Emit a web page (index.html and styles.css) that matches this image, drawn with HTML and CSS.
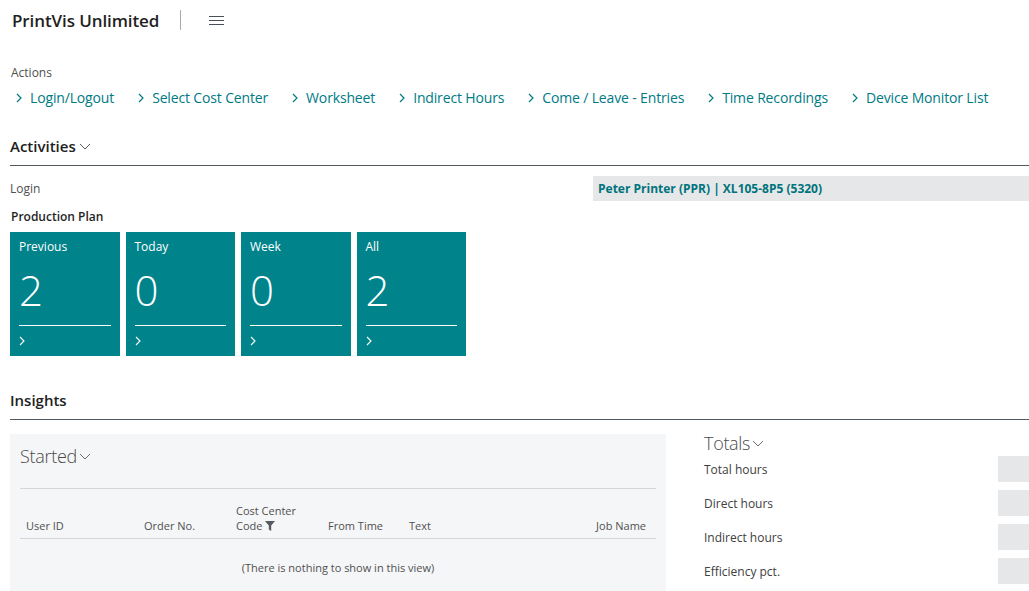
FILE: index.html
```html
<!DOCTYPE html>
<html lang="en">
<head>
<meta charset="utf-8">
<title>PrintVis Unlimited</title>
<link rel="stylesheet" href="styles.css">
</head>
<body>
<header class="topbar">
  <div class="app-title">PrintVis Unlimited</div>
  <div class="divider"></div>
  <div class="hamburger"><span></span><span></span><span></span></div>
</header>

<section class="actions">
  <div class="actions-label">Actions</div>
  <nav class="action-links">
    <a class="action"><svg class="chev" viewBox="0 0 6 10"><polyline points="1,1 5,5 1,9"/></svg>Login/Logout</a>
    <a class="action"><svg class="chev" viewBox="0 0 6 10"><polyline points="1,1 5,5 1,9"/></svg>Select Cost Center</a>
    <a class="action"><svg class="chev" viewBox="0 0 6 10"><polyline points="1,1 5,5 1,9"/></svg>Worksheet</a>
    <a class="action"><svg class="chev" viewBox="0 0 6 10"><polyline points="1,1 5,5 1,9"/></svg>Indirect Hours</a>
    <a class="action"><svg class="chev" viewBox="0 0 6 10"><polyline points="1,1 5,5 1,9"/></svg>Come / Leave - Entries</a>
    <a class="action"><svg class="chev" viewBox="0 0 6 10"><polyline points="1,1 5,5 1,9"/></svg>Time Recordings</a>
    <a class="action"><svg class="chev" viewBox="0 0 6 10"><polyline points="1,1 5,5 1,9"/></svg>Device Monitor List</a>
  </nav>
</section>

<section class="activities">
  <h2 class="section-head">Activities<svg class="down" viewBox="0 0 12 7"><polyline points="1,1 6,6 11,1"/></svg></h2>
  <div class="login-row">
    <div class="login-label">Login</div>
    <div class="login-value">Peter Printer (PPR) | XL105-8P5 (5320)</div>
  </div>
  <div class="group-label">Production Plan</div>
  <div class="tiles">
    <div class="tile"><div class="tile-title">Previous</div><div class="tile-num">2</div><div class="tile-foot"><svg class="tchev" viewBox="0 0 6 10"><polyline points="1,1 5,5 1,9"/></svg></div></div>
    <div class="tile"><div class="tile-title">Today</div><div class="tile-num">0</div><div class="tile-foot"><svg class="tchev" viewBox="0 0 6 10"><polyline points="1,1 5,5 1,9"/></svg></div></div>
    <div class="tile"><div class="tile-title">Week</div><div class="tile-num">0</div><div class="tile-foot"><svg class="tchev" viewBox="0 0 6 10"><polyline points="1,1 5,5 1,9"/></svg></div></div>
    <div class="tile"><div class="tile-title">All</div><div class="tile-num">2</div><div class="tile-foot"><svg class="tchev" viewBox="0 0 6 10"><polyline points="1,1 5,5 1,9"/></svg></div></div>
  </div>
</section>

<section class="insights">
  <h2 class="section-head">Insights</h2>
  <div class="insight-body">
    <div class="started">
      <div class="part-title">Started<svg class="down" viewBox="0 0 12 7"><polyline points="1,1 6,6 11,1"/></svg></div>
      <div class="grid-head">
        <div class="col c-user">User ID</div>
        <div class="col c-order">Order No.</div>
        <div class="col c-cc">Cost Center<br>Code <svg class="funnel" viewBox="0 0 10 10"><path d="M0 0H10L6.2 4.6V10L3.8 8.6V4.6Z"/></svg></div>
        <div class="col c-from">From Time</div>
        <div class="col c-text">Text</div>
        <div class="col c-job">Job Name</div>
      </div>
      <div class="empty">(There is nothing to show in this view)</div>
    </div>
    <div class="totals">
      <div class="part-title">Totals<svg class="down" viewBox="0 0 12 7"><polyline points="1,1 6,6 11,1"/></svg></div>
      <div class="total-row"><span>Total hours</span><span class="box"></span></div>
      <div class="total-row"><span>Direct hours</span><span class="box"></span></div>
      <div class="total-row"><span>Indirect hours</span><span class="box"></span></div>
      <div class="total-row"><span>Efficiency pct.</span><span class="box"></span></div>
    </div>
  </div>
</section>
</body>
</html>
```

FILE: styles.css
```css
html, body {
  margin: 0;
  padding: 0;
  background: #ffffff;
  overflow: hidden;
}
body {
  font-family: "Open Sans", "Noto Sans", "Liberation Sans", sans-serif;
  color: #212121;
  width: 1029px;
  height: 591px;
}

.topbar {
  height: 40px;
  display: flex;
  align-items: center;
  padding-left: 12px;
}
.app-title {
  font-size: 17px;
  font-weight: 600;
  color: #1f1f1f;
  letter-spacing: -0.1px;
}
.divider {
  width: 1px;
  height: 20px;
  background: #a6aab0;
  margin-left: 21px;
}
.hamburger {
  margin-left: 28px;
  width: 15px;
  display: flex;
  flex-direction: column;
  gap: 3px;
}
.hamburger span {
  display: block;
  height: 1px;
  background: #4a5058;
}

.actions {
  margin-top: 24px;
  padding-left: 11px;
}
.actions-label {
  font-size: 12px;
  line-height: 18px;
  color: #505050;
}
.action-links {
  display: flex;
  gap: 24px;
  margin-top: 6px;
  padding-left: 5px;
}
.action {
  display: flex;
  align-items: center;
  font-size: 14px;
  line-height: 20px;
  color: #007a85;
  letter-spacing: -0.15px;
}
.chev {
  width: 6px;
  height: 10px;
  margin-right: 8px;
  fill: none;
  stroke: #007a85;
  stroke-width: 1.2;
}

.section-head {
  margin: 0 0 0 10px;
  font-size: 15px;
  font-weight: 600;
  line-height: 22px;
  color: #212121;
  padding-bottom: 8px;
  border-bottom: 1px solid #505a60;
  display: flex;
  align-items: center;
}
.down {
  width: 12px;
  height: 7px;
  margin-left: 3px;
  fill: none;
  stroke: #505a60;
  stroke-width: 1;
}
.activities {
  margin-top: 27px;
}
.login-row {
  display: flex;
  margin: 10px 0 0 10px;
  height: 25px;
  align-items: center;
}
.login-label {
  width: 583px;
  font-size: 12px;
  color: #505050;
}
.login-value {
  flex: 1;
  height: 25px;
  background: #e6e7e8;
  padding-left: 5px;
  font-size: 12px;
  font-weight: 700;
  line-height: 25px;
  color: #00737d;
}
.group-label {
  margin: 8px 0 0 11px;
  font-size: 12px;
  font-weight: 600;
  line-height: 16px;
  color: #1f1f1f;
}
.tiles {
  display: flex;
  gap: 6px;
  margin: 7px 0 0 10px;
}
.tile {
  width: 109.5px;
  height: 124px;
  background: #00838b;
  color: #ffffff;
  padding: 0 9px;
  box-sizing: border-box;
  display: flex;
  flex-direction: column;
}
.tile-title {
  margin-top: 7px;
  font-size: 12px;
  line-height: 16px;
}
.tile-num {
  margin-top: 5px;
  font-size: 42px;
  font-weight: 300;
  line-height: 60px;
  height: 65px;
  border-bottom: 1px solid #ffffff;
}
.tile-foot {
  height: 29px;
  display: flex;
  align-items: center;
}
.tchev {
  width: 6px;
  height: 10px;
  fill: none;
  stroke: #ffffff;
  stroke-width: 1.1;
}

.insights {
  margin-top: 33px;
}
.insight-body {
  display: flex;
  margin: 0 0 0 10px;
}
.started {
  width: 656px;
  height: 160px;
  margin-top: 14px;
  background: #f5f6f7;
  padding: 0 10px;
  box-sizing: border-box;
  flex-shrink: 0;
}
.part-title {
  display: flex;
  align-items: center;
  font-size: 18px;
  font-weight: 300;
  color: #4a4a4a;
  line-height: 26px;
  letter-spacing: -0.3px;
}
.started .part-title {
  margin-top: 9px;
  height: 26px;
  padding-bottom: 19px;
  border-bottom: 1px solid #d4d6d8;
}
.part-title .down {
  margin-left: 2px;
  stroke: #6a7078;
}
.grid-head {
  display: flex;
  align-items: flex-end;
  height: 50px;
  border-bottom: 1px solid #d4d6d8;
  font-size: 11px;
  color: #505050;
  padding-bottom: 5px;
  box-sizing: border-box;
  line-height: 15px;
}
.col { padding-left: 6px; box-sizing: border-box; }
.c-user { width: 118px; }
.c-order { width: 92px; }
.c-cc { width: 92px; }
.c-from { width: 81px; }
.c-text { flex: 1; }
.c-job { padding-right: 10px; }
.funnel {
  width: 10px;
  height: 10px;
  fill: #555b62;
  vertical-align: -1px;
}
.empty {
  text-align: center;
  font-size: 11px;
  color: #505050;
  margin-top: 21px;
}

.totals {
  margin-left: 38px;
  flex: 1;
  padding-top: 10px;
}
.total-row {
  display: flex;
  justify-content: space-between;
  align-items: center;
  height: 26px;
  margin-top: 8px;
  font-size: 12px;
  color: #404040;
}
.totals .part-title + .total-row {
  margin-top: 0;
}
.box {
  width: 31px;
  height: 26px;
  background: #e6e7e8;
}
```
